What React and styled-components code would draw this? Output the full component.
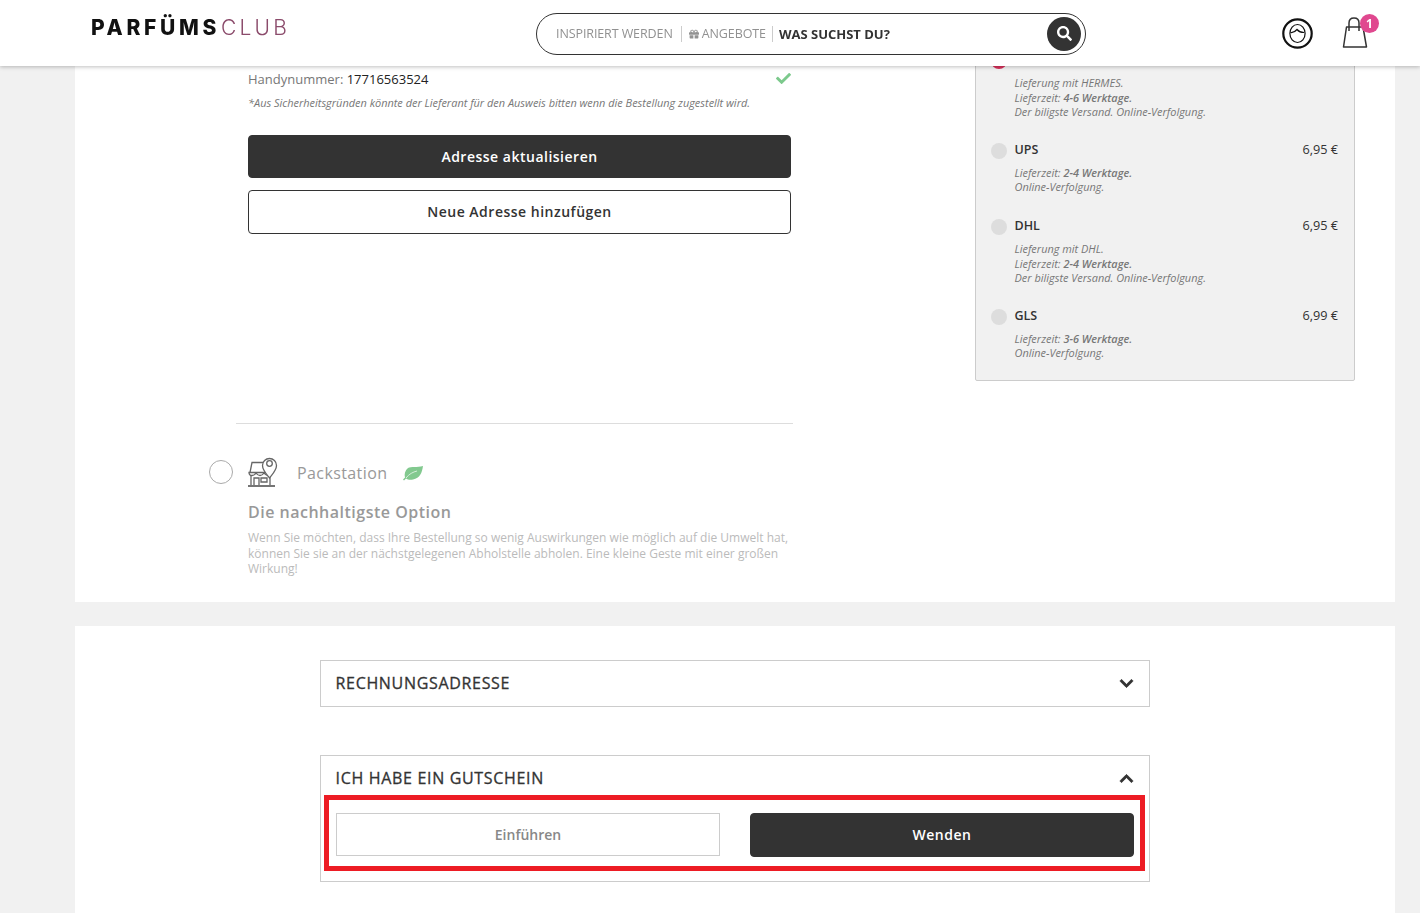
import React from 'react';
import styled, { createGlobalStyle } from 'styled-components';
import { FaCheck, FaChevronDown, FaChevronUp, FaGift, FaSearch } from 'react-icons/fa';

const GlobalStyle = createGlobalStyle`
  html, body {
    margin: 0;
    height: 913px;
    overflow: hidden;
    background: #f1f1f1;
    font-family: 'Open Sans', 'Liberation Sans', sans-serif;
    color: #333;
  }
  * { box-sizing: border-box; }
`;

const Header = styled.header`
  position: fixed;
  top: 0;
  left: 0;
  right: 0;
  height: 66px;
  background: #fff;
  box-shadow: 0 1px 4px rgba(0, 0, 0, 0.25);
  z-index: 5;
  display: flex;
  align-items: center;
  padding: 0 45px 0 91px;
`;

const Logo = styled.div`
  width: 445px;
  margin-top: -10px;
  font-family: Inter, 'Liberation Sans', sans-serif;
  font-size: 21px;
  line-height: 24px;
  letter-spacing: 3.7px;
  white-space: nowrap;
  b { font-weight: 800; color: #111; }
  span { font-weight: 300; color: #8b4b6b; letter-spacing: 3.2px; margin-left: 1px; }
`;

const Search = styled.div`
  width: 550px;
  height: 42px;
  margin-top: 1px;
  border: 1px solid #333;
  border-radius: 21px;
  display: flex;
  align-items: center;
  padding: 0 4px 0 19px;
  font-size: 12.5px;
  letter-spacing: -0.1px;
  color: #919191;
`;

const SearchTab = styled.span`
  display: flex;
  align-items: center;
  gap: 3px;
  height: 16px;
  padding-right: ${(p) => (p.$compact ? 6 : 8)}px;
  margin-right: ${(p) => (p.$compact ? 6 : 7)}px;
  border-right: 1px solid #ccc;
  svg { font-size: 10px; }
`;

const SearchLabel = styled.span`
  flex: 1;
  font-size: 13px;
  font-weight: 700;
  letter-spacing: 0;
  color: #333;
`;

const SearchButton = styled.span`
  width: 34px;
  height: 34px;
  border-radius: 50%;
  background: #333;
  color: #fff;
  display: flex;
  align-items: center;
  justify-content: center;
  font-size: 15px;
`;

const HeaderIcons = styled.div`
  margin-left: auto;
  display: flex;
  align-items: center;
  gap: 28px;
`;

const BagWrap = styled.div`
  position: relative;
  width: 34px;
  height: 34px;
`;

const Badge = styled.span`
  position: absolute;
  top: -2px;
  right: -4px;
  width: 19px;
  height: 19px;
  border-radius: 50%;
  background: #e0488f;
  color: #fff;
  font-size: 12px;
  font-weight: 700;
  line-height: 19px;
  text-align: center;
`;

const Page = styled.main`
  padding: 0 25px 0 75px;
`;

const Card = styled.section`
  background: #fff;
  margin-bottom: 24px;
`;

const DeliveryCard = styled(Card)`
  height: 602px;
  display: flex;
  justify-content: space-between;
  padding: 70px 40px 0 161px;
`;

const LeftColumn = styled.div`
  width: 557px;
`;

const Indented = styled.div`
  padding: 0 2px 0 12px;
`;

const PhoneRow = styled.div`
  display: flex;
  justify-content: space-between;
  align-items: center;
  height: 18px;
  font-size: 13px;
  color: #777;
  b { font-weight: 400; color: #222; }
  svg { color: #7cc98c; font-size: 15px; margin: -2px 0 0; }
`;

const Note = styled.p`
  margin: 8px 0 25px;
  font-size: 10.95px;
  line-height: 14px;
  font-style: italic;
  color: #777;
`;

const Button = styled.button`
  display: block;
  width: ${(p) => p.$width || '100%'};
  height: ${(p) => p.$height || 43}px;
  padding: 0 0 ${(p) => (p.$lift ? 2 : 0)}px;
  border-radius: 4px;
  border: 1px solid #333;
  background: ${(p) => (p.$dark ? '#333' : '#fff')};
  color: ${(p) => (p.$dark ? '#fff' : '#333')};
  font-family: inherit;
  font-size: 14px;
  font-weight: 600;
  letter-spacing: 0.5px;
  margin-bottom: ${(p) => p.$gap || 0}px;
`;

const Divider = styled.hr`
  margin: 189px 0 0;
  border: 0;
  border-top: 1px solid #ddd;
`;

const Packstation = styled.div`
  position: relative;
  display: flex;
  align-items: center;
  height: 32px;
  margin-top: 33px;
  padding-left: 11px;
  svg:first-of-type { margin-top: -4px; }
`;

const Radio = styled.span`
  position: absolute;
  left: -27px;
  top: 3px;
  width: 24px;
  height: 24px;
  border-radius: 50%;
  border: 1px solid #aaa;
  background: #fff;
`;

const PackLabel = styled.span`
  margin: 0 15px 0 18px;
  font-size: 16px;
  letter-spacing: 0.4px;
  color: #999;
`;

const PackTitle = styled.h3`
  margin: 12px 0 7px;
  font-size: 16px;
  line-height: 22px;
  font-weight: 600;
  letter-spacing: 0.5px;
  color: #999;
`;

const PackText = styled.p`
  margin: 0;
  font-size: 12px;
  line-height: 15.5px;
  color: #bbb;
`;

const ShippingPanel = styled.aside`
  width: 380px;
  height: 351px;
  margin-top: -40px;
  padding: 19px 16px 0 15px;
  background: #f1f1f1;
  border: 1px solid #ccc;
  border-radius: 2px;
`;

const Option = styled.div`
  display: grid;
  grid-template-columns: 23.5px 1fr auto;
  margin-bottom: ${(p) => p.$gap}px;
`;

const OptionDot = styled.span`
  width: 16px;
  height: 16px;
  margin-top: 3px;
  border-radius: 50%;
  background: ${(p) => (p.$active ? '#d8315b' : '#ddd')};
`;

const OptionName = styled.span`
  font-size: 12.5px;
  line-height: 20px;
  font-weight: 600;
  color: #333;
`;

const OptionPrice = styled.span`
  margin-top: -1px;
  font-size: 12.7px;
  line-height: 20px;
  color: #333;
`;

const OptionText = styled.p`
  grid-column: 2 / 4;
  margin: 6px 0 0;
  font-size: 10.95px;
  line-height: 14.6px;
  font-style: italic;
  color: #777;
  b { font-weight: 600; }
`;

const VoucherCard = styled(Card)`
  height: 400px;
  padding: 34px 245px;
`;

const Accordion = styled.div`
  position: relative;
  border: 1px solid #ccc;
  margin-bottom: 48px;
`;

const AccordionHead = styled.div`
  display: flex;
  justify-content: space-between;
  align-items: center;
  height: ${(p) => p.$height}px;
  padding: 0 15px 2px 14.5px;
  font-size: 16px;
  font-weight: 400;
  letter-spacing: 0.68px;
  -webkit-text-stroke: 0.3px #333;
  color: #333;
  svg { font-size: 15px; margin-top: 2px; stroke: currentColor; stroke-width: 24; }
`;

const VoucherRow = styled.div`
  display: flex;
  justify-content: space-between;
  padding: 12px 15px 24px;
`;

const VoucherInput = styled.div`
  width: 384px;
  height: 43px;
  border: 1px solid #ccc;
  display: flex;
  align-items: center;
  justify-content: center;
  font-size: 14px;
  font-weight: 600;
  color: #888;
`;

// the red marker drawn over the screenshot
const Highlight = styled.div`
  position: absolute;
  left: 3px;
  right: 4px;
  top: 39px;
  bottom: 10px;
  border: 5px solid #ed1c24;
  pointer-events: none;
`;

const FaceIcon = () => (
  <svg width="31" height="31" viewBox="0 0 31 31" fill="none" stroke="#111">
    <circle cx="15.5" cy="15.5" r="14.2" strokeWidth="2.2" />
    <ellipse cx="15.5" cy="15.5" rx="7.6" ry="9" strokeWidth="1.2" />
    <path d="M8.500 14.500c3.500.5 5.500-1.800 6.500-3 1.500 1.800 4 3 7 3" strokeWidth="1.2" />
  </svg>
);

const BagIcon = () => (
  <svg width="34" height="34" viewBox="0 0 34 34" fill="none" stroke="#333" strokeWidth="1.5">
    <path d="M5.500 11h16.500l3.500 20H2.500z" strokeLinejoin="round" />
    <path d="M8 15V7c0-3 2-5 5-5s5 2 5 5v8" />
  </svg>
);

const StoreIcon = () => (
  <svg width="32" height="33" viewBox="0 0 32 33" fill="none" stroke="#666" strokeWidth="1.3">
    <path d="M3 17.500l2-10h16l2 10" />
    <path d="M2 17.500h22c0 2-1.500 3-3 3s-3-1-4-2.500c-1 1.500-2 2.500-4 2.500s-3-1-4-2.500c-1 1.500-2 2.500-4 2.500s-3-1-3-3z" />
    <path d="M4 20.500v9.500M23 20.500v9.500M7 30v-7h5v7M14 23h6v4h-6z" />
    <path d="M1 31h27" strokeWidth="1.800" />
    <path d="M22.500 23c-4-5-7-8-7-12.500a7 7 0 0 1 14 0c0 4.500-3 7.500-7 12.500z" fill="#fff" />
    <circle cx="22.500" cy="8.500" r="2.800" />
  </svg>
);

const LeafIcon = () => (
  <svg width="22" height="16" viewBox="0 0 22 16">
    <path d="M21 1c-1 7-3 12-10 13.500-3 .6-5.500 0-7-1l-2 2-1-1 2-2c-1-3 0-7 3-9.500C9 1.500 15 2.500 21 1z" fill="#82c98f" />
    <path d="M4 13c3-4 7-6 11-7" fill="none" stroke="#d5eeda" />
  </svg>
);

const App = () => {
  return (
    <>
      <GlobalStyle />
      <Header>
        <Logo>
          <b>PARFÜMS</b>
          <span>CLUB</span>
        </Logo>
        <Search>
          <SearchTab>INSPIRIERT WERDEN</SearchTab>
          <SearchTab $compact>
            <FaGift />
            ANGEBOTE
          </SearchTab>
          <SearchLabel>WAS SUCHST DU?</SearchLabel>
          <SearchButton>
            <FaSearch />
          </SearchButton>
        </Search>
        <HeaderIcons>
          <FaceIcon />
          <BagWrap>
            <BagIcon />
            <Badge>1</Badge>
          </BagWrap>
        </HeaderIcons>
      </Header>
      <Page>
        <DeliveryCard>
          <LeftColumn>
            <Indented>
              <PhoneRow>
                <span>
                  Handynummer: <b>17716563524</b>
                </span>
                <FaCheck />
              </PhoneRow>
              <Note>*Aus Sicherheitsgründen könnte der Lieferant für den Ausweis bitten wenn die Bestellung zugestellt wird.</Note>
              <Button $dark $gap={12}>Adresse aktualisieren</Button>
              <Button $height={44} $lift>Neue Adresse hinzufügen</Button>
            </Indented>
            <Divider />
            <Packstation>
              <Radio />
              <StoreIcon />
              <PackLabel>Packstation</PackLabel>
              <LeafIcon />
            </Packstation>
            <Indented>
              <PackTitle>Die nachhaltigste Option</PackTitle>
              <PackText>
                Wenn Sie möchten, dass Ihre Bestellung so wenig Auswirkungen wie möglich auf die Umwelt hat, können Sie sie an der nächstgelegenen Abholstelle abholen. Eine kleine Geste mit einer großen Wirkung!
              </PackText>
            </Indented>
          </LeftColumn>
          <ShippingPanel>
            <Option $gap={20}>
              <OptionDot $active />
              <OptionName>HERMES</OptionName>
              <OptionPrice>4,95 €</OptionPrice>
              <OptionText>
                Lieferung mit HERMES.<br />
                Lieferzeit: <b>4-6 Werktage.</b><br />
                Der biligste Versand. Online-Verfolgung.
              </OptionText>
            </Option>
            <Option $gap={21}>
              <OptionDot />
              <OptionName>UPS</OptionName>
              <OptionPrice>6,95 €</OptionPrice>
              <OptionText>
                Lieferzeit: <b>2-4 Werktage.</b><br />
                Online-Verfolgung.
              </OptionText>
            </Option>
            <Option $gap={20}>
              <OptionDot />
              <OptionName>DHL</OptionName>
              <OptionPrice>6,95 €</OptionPrice>
              <OptionText>
                Lieferung mit DHL.<br />
                Lieferzeit: <b>2-4 Werktage.</b><br />
                Der biligste Versand. Online-Verfolgung.
              </OptionText>
            </Option>
            <Option $gap={0}>
              <OptionDot />
              <OptionName>GLS</OptionName>
              <OptionPrice>6,99 €</OptionPrice>
              <OptionText>
                Lieferzeit: <b>3-6 Werktage.</b><br />
                Online-Verfolgung.
              </OptionText>
            </Option>
          </ShippingPanel>
        </DeliveryCard>
        <VoucherCard>
          <Accordion>
            <AccordionHead $height={45}>
              RECHNUNGSADRESSE
              <FaChevronDown />
            </AccordionHead>
          </Accordion>
          <Accordion>
            <AccordionHead $height={45}>
              ICH HABE EIN GUTSCHEIN
              <FaChevronUp />
            </AccordionHead>
            <VoucherRow>
              <VoucherInput>Einführen</VoucherInput>
              <Button $dark $lift $width="384px" $height={44}>Wenden</Button>
            </VoucherRow>
            <Highlight />
          </Accordion>
        </VoucherCard>
      </Page>
    </>
  );
};

export default App;
